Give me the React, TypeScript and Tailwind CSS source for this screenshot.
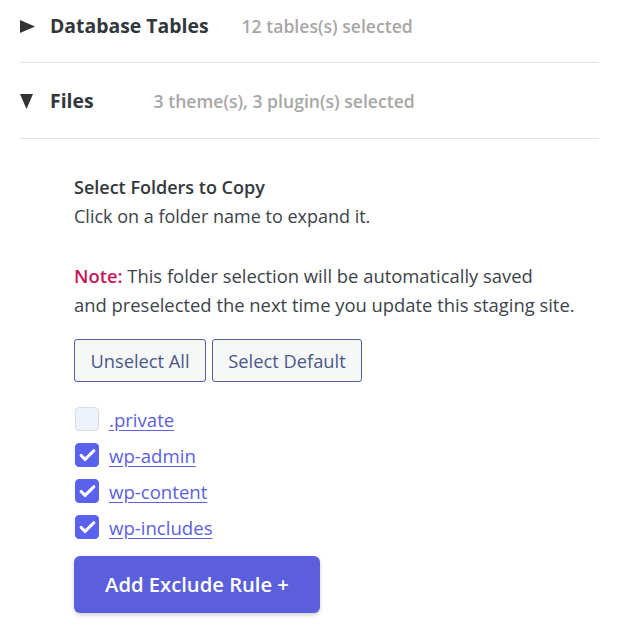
import { Check } from "lucide-react"

const folders = [
    { name: ".private", checked: false },
    { name: "wp-admin", checked: true },
    { name: "wp-content", checked: true },
    { name: "wp-includes", checked: true },
]

function SectionHeader({ open, title, summary, gapClass }: { open: boolean; title: string; summary: string; gapClass: string }) {
    return (
        <div className="flex h-[52px] items-center">
            <span className="flex w-[30px] shrink-0 items-center text-[#333]">
                {open ? (
                    <svg width="13" height="15" viewBox="0 0 13 15">
                        <path d="M0 0 H13 L6.5 15 Z" fill="currentColor" />
                    </svg>
                ) : (
                    <svg width="15" height="13" viewBox="0 0 15 13">
                        <path d="M0 0 L15 6.5 L0 13 Z" fill="currentColor" />
                    </svg>
                )}
            </span>
            <span className={`text-[19.4px] font-bold text-[#32373c] ${gapClass}`}>{title}</span>
            <span className="text-[17.6px] font-semibold text-[#a7a7a7]">{summary}</span>
        </div>
    )
}

export default function App() {
    return (
        <div className="h-[642px] w-[617px] overflow-hidden bg-white px-[20px] font-['Open_Sans',sans-serif] text-[#3c434a]">
            <div className="w-[579px]">
                <div className="border-b border-[#e2e2e2] pb-[10px]">
                    <SectionHeader open={false} title="Database Tables" summary="12 tables(s) selected" gapClass="mr-[33px]" />
                </div>
                <div className="border-b border-[#e2e2e2] pb-[11px] pt-[12px]">
                    <SectionHeader open title="Files" summary="3 theme(s), 3 plugin(s) selected" gapClass="mr-[60px]" />
                </div>
            </div>
            <div className="pl-[54px] pt-[34px] text-[18px] leading-[29px]">
                <div className="font-semibold text-[#32373c]">Select Folders to Copy</div>
                <div>Click on a folder name to expand it.</div>
                <p className="mt-[30px] text-[18.4px]">
                    <strong className="font-semibold text-[#c2185b]">Note:</strong> This folder selection will be automatically saved
                    <br />
                    and preselected the next time you update this staging site.
                </p>
                <div className="mt-[20px] flex gap-[6px]">
                    <button type="button" className="h-[43px] w-[132px] rounded-[3px] border border-[#4f5fa0] bg-[#f6f7f7] text-[18.3px] text-[#4b5788]">
                        Unselect All
                    </button>
                    <button type="button" className="h-[43px] w-[150px] rounded-[3px] border border-[#4f5fa0] bg-[#f6f7f7] text-[18.3px] text-[#4b5788]">
                        Select Default
                    </button>
                </div>
                <div className="mt-[19px] flex flex-col">
                    {folders.map((folder) => (
                        <label key={folder.name} className="flex h-[36px] items-center gap-[10px] pl-[1px]">
                            <span
                                className={`flex h-[24px] w-[24px] items-center justify-center rounded-[4px] border ${folder.checked ? "border-[#5b61ef] bg-[#5b61ef]" : "border-[#dcdcde] bg-[#eef2fb]"}`}
                            >
                                {folder.checked && <Check size={19} strokeWidth={4} className="text-white" />}
                            </span>
                            <a href="#" className="text-[18.6px] text-[#5b5fe0] underline underline-offset-[3px]">
                                {folder.name}
                            </a>
                        </label>
                    ))}
                </div>
                <button
                    type="button"
                    className="mt-[11px] h-[57px] w-[246px] rounded-[6px] bg-[#5b5fdc] text-[20.2px] font-semibold text-white shadow-[0_2px_4px_rgba(0,0,0,0.18)]"
                >
                    Add Exclude Rule +
                </button>
            </div>
        </div>
    )
}
